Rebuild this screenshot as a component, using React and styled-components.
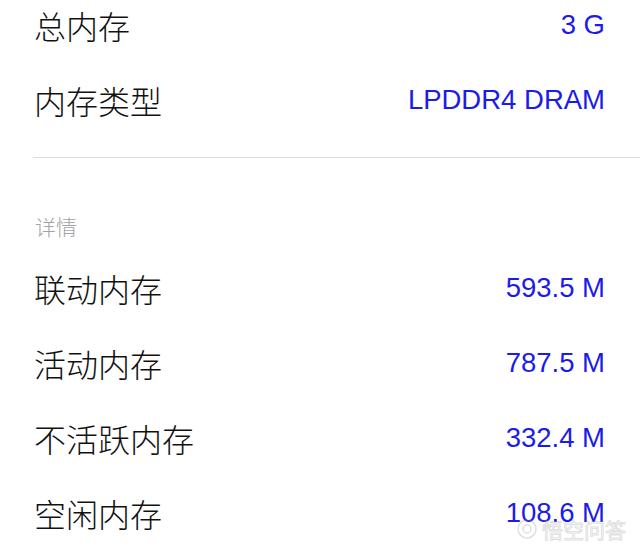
import React from 'react'
import styled, {createGlobalStyle} from 'styled-components'

const GlobalStyle = createGlobalStyle`
    html, body {
        margin: 0;
        padding: 0;
        background: #fff;
        overflow: hidden;
    }
`

const Page = styled.div`
    position: relative;
    width: 640px;
    height: 546px;
    overflow: hidden;
    background: #fff;
    font-family: "Noto Sans CJK SC", "Liberation Sans", sans-serif;
`

const Group = styled.div`
    margin-top: ${props => props.offset || 0}px;
`

const Row = styled.div`
    display: flex;
    align-items: center;
    justify-content: space-between;
    height: 75px;
    padding: 0 35px 0 34px;
`

const Label = styled.span`
    font-size: 32px;
    font-weight: 300;
    color: #111;
`

const Value = styled.span`
    font-family: "Liberation Sans", Arial, sans-serif;
    font-size: 27.5px;
    color: #1c1ce8;
`

const Divider = styled.div`
    height: 1px;
    margin: 20px 0 0 33px;
    background: #dcdcdc;
`

const SectionHeader = styled.div`
    padding: 57px 35px 13px;
    font-size: 21px;
    font-weight: 300;
    line-height: 22px;
    color: #a3a3a3;
`

const Watermark = styled.div`
    position: absolute;
    right: 14px;
    bottom: 2px;
    display: flex;
    align-items: center;
    gap: 4px;
    opacity: 0.3;
    color: #fff;
    font-size: 21px;
    -webkit-text-stroke: 1px #9a9a9a;
`

const summary = [
    {label: '总内存', value: '3 G'},
    {label: '内存类型', value: 'LPDDR4 DRAM'},
]

const details = [
    {label: '联动内存', value: '593.5 M'},
    {label: '活动内存', value: '787.5 M'},
    {label: '不活跃内存', value: '332.4 M'},
    {label: '空闲内存', value: '108.6 M'},
]

const App = () => {
    return (
        <Page>
            <GlobalStyle />
            <Group offset={-13}>
                {summary.map(item => (
                    <Row key={item.label}>
                        <Label>{item.label}</Label>
                        <Value>{item.value}</Value>
                    </Row>
                ))}
            </Group>
            <Divider />
            <SectionHeader>详情</SectionHeader>
            <Group>
                {details.map(item => (
                    <Row key={item.label}>
                        <Label>{item.label}</Label>
                        <Value>{item.value}</Value>
                    </Row>
                ))}
            </Group>
            <Watermark>
                <svg width="22" height="22" viewBox="0 0 22 22">
                    <circle cx="11" cy="11" r="9" fill="none" stroke="#9a9a9a" strokeWidth="1.5" />
                    <circle cx="11" cy="11" r="4" fill="none" stroke="#9a9a9a" strokeWidth="1.5" />
                </svg>
                <span>悟空问答</span>
            </Watermark>
        </Page>
    )
}

export default App
